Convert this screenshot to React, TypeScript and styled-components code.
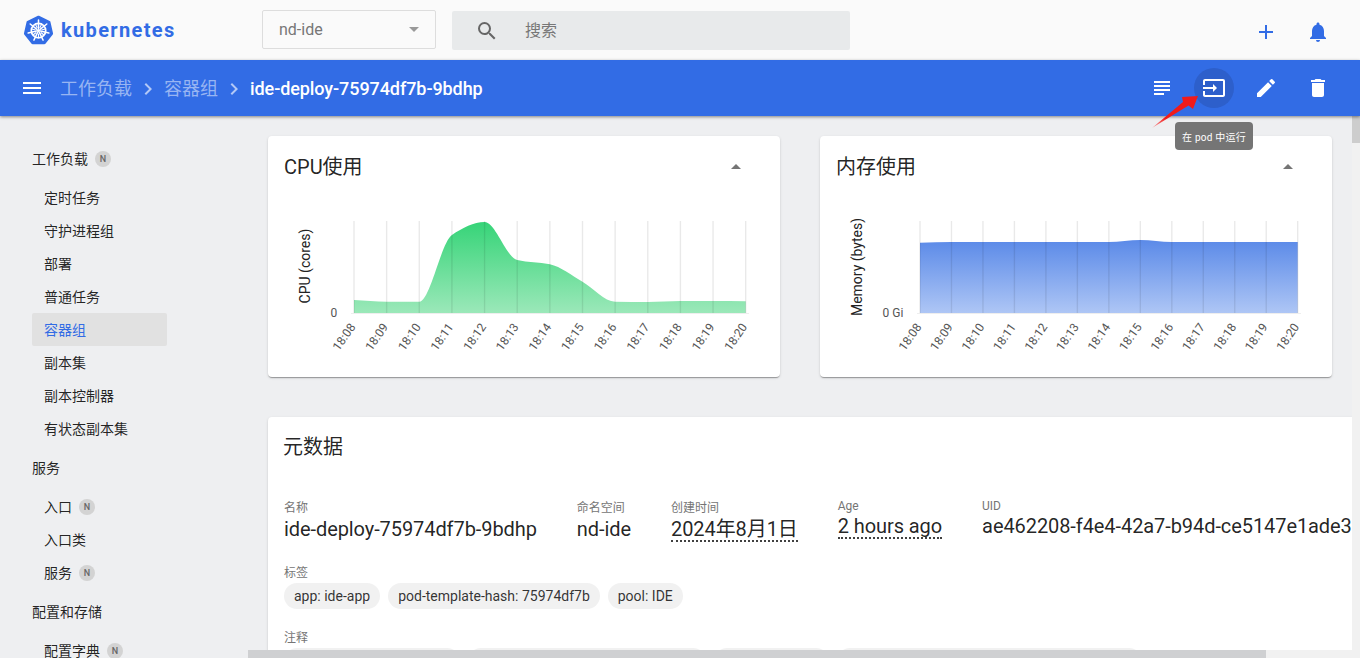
import React from "react";
import styled, { createGlobalStyle } from "styled-components";
import { MdMenu, MdChevronRight, MdSubject, MdInput, MdEdit, MdDelete, MdAdd, MdNotifications, MdSearch } from "react-icons/md";

const Global = createGlobalStyle`
  html, body { margin: 0; padding: 0; height: 100%; overflow: hidden; }
  body { font-family: Roboto, "Noto Sans CJK SC", sans-serif; background: #eeeff1; color: rgba(0,0,0,.87); }
  * { box-sizing: border-box; }
`;

const Page = styled.div`
  width: 1360px; height: 658px; display: flex; flex-direction: column; overflow: hidden; position: relative;
`;
const TopBar = styled.header`
  height: 60px; flex: none; background: #fafafa; display: flex; align-items: center; padding-right: 30px;
`;
const Brand = styled.div`
  width: 262px; flex: none; display: flex; align-items: center; gap: 7px; padding-left: 23px;
`;
const BrandName = styled.span`
  font-weight: 700; font-size: 20px; letter-spacing: 1.35px; color: #326ce5; line-height: 24px;
`;
const NsSelect = styled.div`
  width: 174px; height: 39px; margin-top: -1px; border: 1px solid #ddd; border-radius: 2px; display: flex; align-items: center;
  justify-content: space-between; padding: 0 16px; font-size: 16px; color: #777; flex: none;
`;
const Caret = styled.i`
  width: 0; height: 0; border-left: 5px solid transparent; border-right: 5px solid transparent;
  border-top: 5px solid #999; display: block;
`;
const Search = styled.div`
  width: 398px; height: 39px; margin-left: 16px; margin-top: 1px; background: #e8eaeb; border-radius: 2px; display: flex; align-items: center;
  gap: 26px; padding-left: 23px; font-size: 16px; color: #777; flex: none;
  svg { color: #666; }
`;
const SearchText = styled.span`
  margin-top: -3px;
`;
const TopActions = styled.div`
  margin-left: auto; margin-top: 4px; display: flex; gap: 28px; color: #326ce5;
`;
const ActionBar = styled.div`
  height: 56px; flex: none; background: #326ce5; display: flex; align-items: center; padding: 0 22px 0 20px;
  box-shadow: 0 1px 3px rgba(0,0,0,.45); position: relative; z-index: 2; color: #fff;
`;
const Crumbs = styled.nav`
  display: flex; align-items: center; margin: 2px 0 0 16px; font-size: 18px; line-height: 24px;
`;
const Crumb = styled.span<{ $current?: boolean }>`
  color: ${p => (p.$current ? "#fff" : "#98b5f2")}; font-weight: ${p => (p.$current ? 500 : 400)};
  letter-spacing: ${p => (p.$current ? "-0.08px" : "0")};
`;
const CrumbSep = styled(MdChevronRight)`
  color: #b3c8f6; margin: 0 4px;
`;
const Actions = styled.div`
  margin-left: auto; display: flex; gap: 12px;
`;
const IconBtn = styled.div<{ $active?: boolean }>`
  width: 40px; height: 40px; border-radius: 50%; display: flex; align-items: center; justify-content: center;
  background: ${p => (p.$active ? "#2d5fcb" : "transparent")};
`;
const Tooltip = styled.div`
  position: absolute; left: 1175px; top: 122px; width: 78px; height: 28px; background: #757575; border-radius: 4px; color: #fff;
  font-size: 10px; letter-spacing: .25px; display: flex; align-items: center; justify-content: center; z-index: 5; white-space: nowrap;
`;
const Annotation = styled.svg`
  position: absolute; left: 1148px; top: 90px; z-index: 6;
`;
const Main = styled.div`
  flex: 1; min-height: 0; display: flex;
`;
const Side = styled.aside`
  width: 248px; flex: none; padding-top: 19.5px; overflow: hidden;
`;
const SideHead = styled.div`
  height: 45px; margin-left: 32px; display: flex; align-items: center; gap: 7px; font-size: 14px; color: rgba(0,0,0,.87);
`;
const SideItem = styled.div<{ $selected?: boolean }>`
  height: 33px; margin-left: 32px; width: 135px; padding-left: 12px; display: flex; align-items: center; gap: 7px; font-size: 14px;
  border-radius: 2px;
  color: ${p => (p.$selected ? "#326ce5" : "rgba(0,0,0,.87)")};
  background: ${p => (p.$selected ? "#e1e1e1" : "transparent")};
`;
const NBadge = styled.span`
  width: 16px; height: 16px; border-radius: 50%; background: #d3d3d3; color: #666; font-size: 9px; font-weight: 500;
  display: flex; align-items: center; justify-content: center; position: relative; top: .5px;
`;
const ContentCol = styled.div`
  flex: 1; min-width: 0; display: flex; flex-direction: column;
`;
const ContentRow = styled.div`
  flex: 1; min-height: 0; display: flex;
`;
const Viewport = styled.main`
  flex: 1; min-width: 0; overflow: hidden; padding: 20px; display: flex; flex-direction: column; gap: 40px;
`;
const VTrack = styled.div`
  width: 8px; flex: none; background: #f1f1f1;
`;
const VThumb = styled.div`
  height: 27px; background: #cdcdcd;
`;
const HRow = styled.div`
  height: 8px; flex: none; background: #f1f1f1; display: flex;
`;
const HThumb = styled.div`
  width: 1018px; background: #cfd0d2;
`;
const ChartGrid = styled.div`
  display: flex; gap: 40px; flex: none;
`;
const Card = styled.section`
  background: #fff; border-radius: 4px; box-shadow: 0 2px 1px -1px rgba(0,0,0,.2), 0 1px 1px 0 rgba(0,0,0,.14), 0 1px 3px 0 rgba(0,0,0,.12);
`;
const ChartCard = styled(Card)`
  width: 512px; height: 241px; flex: none;
`;
const CardHead = styled.div`
  height: 60px; padding: 0 39px 0 16px; display: flex; align-items: center; justify-content: space-between;
  font-size: 20px; font-weight: 400;
`;
const CardTitle = styled.span`
  margin-top: -2px;
`;
const CaretUp = styled.i`
  width: 0; height: 0; border-left: 5px solid transparent; border-right: 5px solid transparent;
  border-bottom: 5px solid #757575; display: block;
`;
const ChartSvg = styled.svg`
  display: block;
`;
const TickText = styled.text`
  font-size: 12px; fill: #555; font-family: Roboto, sans-serif;
`;
const AxisTitle = styled.text`
  font-size: 14px; fill: #222; font-family: Roboto, sans-serif;
`;
const MetaCard = styled(Card)`
  width: 1157px; flex: none; height: 400px; padding: 0 16px;
`;
const MetaTitle = styled.div`
  height: 60px; padding-bottom: 3px; display: flex; align-items: center; font-size: 20px; margin-left: -1px;
`;
const Fields = styled.div`
  display: flex; gap: 40px; margin-top: 23px; white-space: nowrap;
`;
const Field = styled.div<{ $lift?: boolean }>`
  flex: none; margin-top: ${p => (p.$lift ? "-2px" : "0")};
`;
const FieldLabel = styled.div<{ $mt?: number }>`
  font-size: 12px; line-height: 16px; color: #757575; margin-top: ${p => p.$mt ?? 0}px;
`;
const FieldValue = styled.div<{ $lift?: boolean }>`
  font-size: 20px; line-height: 26px; letter-spacing: -0.08px; margin-top: ${p => (p.$lift ? "-1px" : "0")};
`;
const Dotted = styled.span`
  border-bottom: 2px dotted rgba(0,0,0,.75); display: inline-block; line-height: 21px;
`;
const Chips = styled.div`
  display: flex; gap: 8px; margin-top: 2px;
`;
const Chip = styled.span`
  height: 26px; border-radius: 13px; background: #f1f1f1; padding: 0 10px; font-size: 14px; display: flex; align-items: center; white-space: nowrap;
  color: rgba(0,0,0,.8);
`;
const BlankChip = styled.span<{ $w: number }>`
  height: 26px; border-radius: 13px; background: #f1f1f1; width: ${p => p.$w}px; flex: none;
`;

type Pt = [number, number];
function monotone(pts: Pt[]): string {
  const n = pts.length;
  const d: number[] = [];
  const m: number[] = [];
  for (let i = 0; i < n - 1; i++) d[i] = (pts[i + 1][1] - pts[i][1]) / (pts[i + 1][0] - pts[i][0]);
  m[0] = d[0];
  m[n - 1] = d[n - 2];
  for (let i = 1; i < n - 1; i++) {
    if (d[i - 1] * d[i] <= 0) m[i] = 0;
    else m[i] = (2 * d[i - 1] * d[i]) / (d[i - 1] + d[i]);
  }
  let s = `M${pts[0][0]} ${pts[0][1]}`;
  for (let i = 0; i < n - 1; i++) {
    const h = (pts[i + 1][0] - pts[i][0]) / 3;
    s += `C${pts[i][0] + h} ${pts[i][1] + m[i] * h} ${pts[i + 1][0] - h} ${pts[i + 1][1] - m[i + 1] * h} ${pts[i + 1][0]} ${pts[i + 1][1]}`;
  }
  return s;
}

const times = ["18:08", "18:09", "18:10", "18:11", "18:12", "18:13", "18:14", "18:15", "18:16", "18:17", "18:18", "18:19", "18:20"];

function Chart(props: { id: string; x0: number; values: number[]; top: string; bottom: string; gradTop: number; yTitle: string; yTitleY: number; zero: string }) {
  const { id, x0, values, top, bottom, gradTop, yTitle, yTitleY, zero } = props;
  const x1 = 477.7;
  const step = (x1 - x0) / 12;
  const pts: Pt[] = values.map((v, i) => [x0 + i * step, v]);
  const area = `${monotone(pts)}L${x1} 177L${x0} 177Z`;
  return (
    <ChartSvg width={512} height={181} viewBox="0 60 512 181">
      <defs>
        <linearGradient id={id} gradientUnits="userSpaceOnUse" x1="0" y1={gradTop} x2="0" y2="177">
          <stop offset="0" stopColor={top} />
          <stop offset="1" stopColor={bottom} />
        </linearGradient>
      </defs>
      <path d={area} fill={`url(#${id})`} />
      {values.map((_, i) => (
        <line key={i} x1={x0 + i * step} x2={x0 + i * step} y1={85} y2={177} stroke="rgba(0,0,0,.085)" strokeWidth={1.4} />
      ))}
      <line x1={x0 - 3} x2={481} y1={177.5} y2={177.5} stroke="#eee" strokeWidth={1} />
      {times.map((t, i) => (
        <TickText key={t} textAnchor="end" transform={`translate(${x0 + i * step + 2} 191) rotate(-55)`}>{t}</TickText>
      ))}
      <TickText x={62.5} y={181}>{zero}</TickText>
      <AxisTitle textAnchor="middle" transform={`translate(41.5 ${yTitleY}) rotate(-90)`}>{yTitle}</AxisTitle>
    </ChartSvg>
  );
}

const Logo = () => {
  const spokes = [0, 1, 2, 3, 4, 5, 6].map(i => (i * 2 * Math.PI) / 7 - Math.PI / 2);
  const hept = spokes.map(a => `${15 + 13.6 * Math.cos(a)},${15.6 + 13.6 * Math.sin(a)}`).join(" ");
  return (
    <svg width="31" height="31" viewBox="0 0 30 31">
      <polygon points={hept} fill="#326ce5" stroke="#326ce5" strokeWidth="2.6" strokeLinejoin="round" />
      <circle cx="15" cy="15.6" r="7.2" fill="none" stroke="#fff" strokeWidth="1.7" />
      <circle cx="15" cy="15.6" r="1.6" fill="#fff" />
      {spokes.map((a, i) => (
        <line key={i} x1={15 + 2 * Math.cos(a)} y1={15.6 + 2 * Math.sin(a)} x2={15 + 10.6 * Math.cos(a)} y2={15.6 + 10.6 * Math.sin(a)} stroke="#fff" strokeWidth="1.5" strokeLinecap="round" />
      ))}
      {spokes.map((a, i) => {
        const b = a + Math.PI / 7;
        return <line key={i} x1={15 + 3 * Math.cos(b)} y1={15.6 + 3 * Math.sin(b)} x2={15 + 7 * Math.cos(b)} y2={15.6 + 7 * Math.sin(b)} stroke="#fff" strokeWidth="1.1" />;
      })}
    </svg>
  );
};

const navGroups = [
  { head: "工作负载", n: true, items: [["定时任务"], ["守护进程组"], ["部署"], ["普通任务"], ["容器组", "sel"], ["副本集"], ["副本控制器"], ["有状态副本集"]] },
  { head: "服务", n: false, items: [["入口", "n"], ["入口类"], ["服务", "n"]] },
  { head: "配置和存储", n: false, items: [["配置字典", "n"]] },
];

export default function App() {
  return (
    <Page>
      <Global />
      <TopBar>
        <Brand>
          <Logo />
          <BrandName>kubernetes</BrandName>
        </Brand>
        <NsSelect>nd-ide<Caret /></NsSelect>
        <Search><MdSearch size={24} /><SearchText>搜索</SearchText></Search>
        <TopActions>
          <MdAdd size={24} />
          <MdNotifications size={24} />
        </TopActions>
      </TopBar>
      <ActionBar>
        <MdMenu size={24} />
        <Crumbs>
          <Crumb>工作负载</Crumb>
          <CrumbSep size={24} />
          <Crumb>容器组</Crumb>
          <CrumbSep size={24} />
          <Crumb $current>ide-deploy-75974df7b-9bdhp</Crumb>
        </Crumbs>
        <Actions>
          <IconBtn><MdSubject size={24} /></IconBtn>
          <IconBtn $active><MdInput size={24} /></IconBtn>
          <IconBtn><MdEdit size={24} /></IconBtn>
          <IconBtn><MdDelete size={24} /></IconBtn>
        </Actions>
      </ActionBar>
      <Tooltip>在 pod 中运行</Tooltip>
      <Annotation width="56" height="44" viewBox="0 0 56 44">
        <defs>
          <linearGradient id="arrowFade" x1="0" y1="1" x2="1" y2="0">
            <stop offset="0" stopColor="#ff2020" stopOpacity=".3" />
            <stop offset=".3" stopColor="#f01a1a" />
            <stop offset="1" stopColor="#f01a1a" />
          </linearGradient>
        </defs>
        <polygon points="4,38 35,12 34,7 50,6 45,19 40.5,15.5" fill="url(#arrowFade)" />
      </Annotation>
      <Main>
        <Side>
          {navGroups.map(g => (
            <React.Fragment key={g.head}>
              <SideHead>{g.head}{g.n && <NBadge>N</NBadge>}</SideHead>
              {g.items.map(([label, flag]) => (
                <SideItem key={label} $selected={flag === "sel"}>
                  {label}
                  {flag === "n" && <NBadge>N</NBadge>}
                </SideItem>
              ))}
            </React.Fragment>
          ))}
        </Side>
        <ContentCol>
          <ContentRow>
            <Viewport>
              <ChartGrid>
                <ChartCard>
                  <CardHead><CardTitle>CPU使用</CardTitle><CaretUp /></CardHead>
                  <Chart id="cpuFill" x0={86} values={[164, 165.7, 165.7, 99, 86, 124, 128.3, 145.7, 165.7, 166, 165, 165, 165.3]} top="#36d478" bottom="#9be8b9" gradTop={86} yTitle="CPU (cores)" yTitleY={130} zero="0" />
                </ChartCard>
                <ChartCard>
                  <CardHead><CardTitle>内存使用</CardTitle><CaretUp /></CardHead>
                  <Chart id="memFill" x0={100} values={[106.8, 106, 106, 106, 106, 106, 106, 104, 106, 106, 106, 106, 106]} top="#5b8ae8" bottom="#aec6f5" gradTop={104} yTitle="Memory (bytes)" yTitleY={131} zero="0 Gi" />
                </ChartCard>
              </ChartGrid>
              <MetaCard>
                <MetaTitle>元数据</MetaTitle>
                <Fields>
                  <Field><FieldLabel>名称</FieldLabel><FieldValue>ide-deploy-75974df7b-9bdhp</FieldValue></Field>
                  <Field><FieldLabel>命名空间</FieldLabel><FieldValue>nd-ide</FieldValue></Field>
                  <Field><FieldLabel>创建时间</FieldLabel><FieldValue><Dotted>2024年8月1日</Dotted></FieldValue></Field>
                  <Field $lift><FieldLabel>Age</FieldLabel><FieldValue $lift><Dotted>2 hours ago</Dotted></FieldValue></Field>
                  <Field $lift><FieldLabel>UID</FieldLabel><FieldValue $lift>ae462208-f4e4-42a7-b94d-ce5147e1ade3</FieldValue></Field>
                </Fields>
                <FieldLabel $mt={23}>标签</FieldLabel>
                <Chips>
                  <Chip>app: ide-app</Chip>
                  <Chip>pod-template-hash: 75974df7b</Chip>
                  <Chip>pool: IDE</Chip>
                </Chips>
                <FieldLabel $mt={21}>注释</FieldLabel>
                <Chips>
                  <BlankChip $w={176} />
                  <BlankChip $w={238} />
                  <BlankChip $w={115} />
                  <BlankChip $w={305} />
                </Chips>
              </MetaCard>
            </Viewport>
            <VTrack><VThumb /></VTrack>
          </ContentRow>
          <HRow><HThumb /></HRow>
        </ContentCol>
      </Main>
    </Page>
  );
}
